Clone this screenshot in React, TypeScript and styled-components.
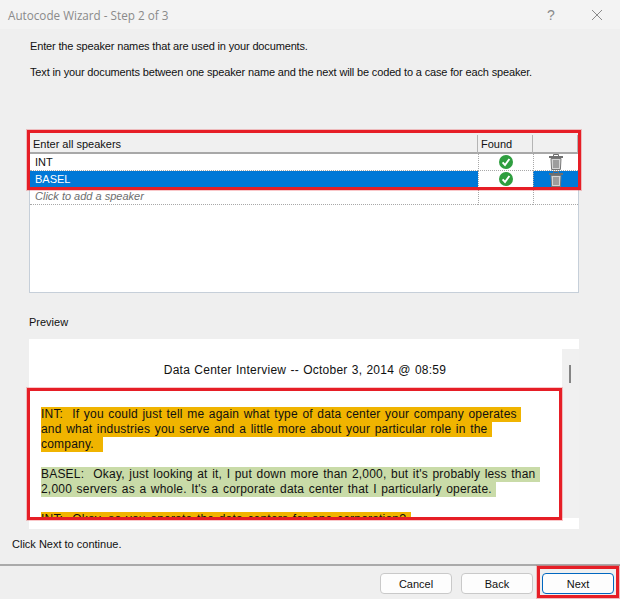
import * as React from 'react';
import styled, { createGlobalStyle } from 'styled-components';

const GlobalStyle = createGlobalStyle`
  html, body {
    margin: 0;
    padding: 0;
    background: #efefef;
  }
  body {
    font-family: "Liberation Sans", Arial, sans-serif;
    font-size: 11px;
    color: #111;
  }
`;

const Dialog = styled.div`
  width: 620px;
  height: 599px;
  display: flex;
  flex-direction: column;
  overflow: hidden;
  background: #efefef;
`;

const TitleBar = styled.div`
  height: 29px;
  display: flex;
  align-items: center;
  padding: 0 0 0 8px;
  background: #f3f3f3;
  flex: none;
`;

const Title = styled.div`
  flex: 1;
  color: #8a8a8a;
  font-family: "Open Sans", sans-serif;
  font-size: 11.7px;
`;

const TitleButton = styled.div`
  width: 46px;
  display: flex;
  justify-content: center;
  color: #8a8a8a;
  font-size: 14px;
`;

const Body = styled.div`
  flex: 1;
  display: flex;
  flex-direction: column;
  padding: 10px 41px 0 29px;
`;

const Intro = styled.p`
  margin: 0 0 12px 1px;
  height: 14px;
  line-height: 14px;
  white-space: nowrap;
  letter-spacing: -0.15px;
`;

const Outlined = styled.div`
  position: relative;
  display: flex;
`;

const RedBox = styled.div<{ $inset: string }>`
  position: absolute;
  inset: ${(props) => props.$inset};
  border: 3px solid #e61e26;
  box-shadow: 0 0 0 1px rgba(230, 30, 38, 0.25);
  pointer-events: none;
  z-index: 2;
`;

const SpeakerPanel = styled.div`
  margin-top: 44px;
  height: 158px;
  position: relative;
  background: #fff;
  border: 1px solid #c6cfd9;
  border-top: 0;
  box-sizing: border-box;
`;

const SpeakerGrid = styled.div`
  display: grid;
  grid-template-columns: 448px 55px 1fr;
`;

const HeaderCell = styled.div`
  height: 17px;
  line-height: 19px;
  padding-left: 3px;
  background: #f0f0f0;
  border-right: 1px solid #b4b4b4;
  border-bottom: 2px solid #a8a8a8;
`;

const NameCell = styled.div<{ $selected?: boolean; $hint?: boolean }>`
  height: 17px;
  line-height: 16px;
  padding-left: 5px;
  box-sizing: border-box;
  background: ${(props) => (props.$selected ? '#0078d7' : '#fff')};
  color: ${(props) => (props.$selected ? '#fff' : props.$hint ? '#6d6d6d' : '#111')};
  font-style: ${(props) => (props.$hint ? 'italic' : 'normal')};
  border-bottom: 1px dotted #a8a8a8;
`;

const IconCell = styled.div<{ $selected?: boolean }>`
  height: 17px;
  box-sizing: border-box;
  display: flex;
  align-items: center;
  justify-content: center;
  background: ${(props) => (props.$selected ? '#0078d7' : '#fff')};
  border-left: 1px dotted #a8a8a8;
  border-bottom: 1px dotted #a8a8a8;
`;

const PreviewLabel = styled.div`
  margin-top: 22px;
  height: 14px;
  line-height: 14px;
`;

const PreviewBox = styled.div`
  margin-top: 10px;
  height: 190px;
  flex: none;
  background: #fff;
  position: relative;
  padding: 10px 0 9px;
  box-sizing: border-box;
  display: flex;
`;

const DocView = styled.div`
  flex: 1;
  overflow: hidden;
  padding-left: 12px;
`;

const DocTitle = styled.div`
  height: 40px;
  padding-top: 13px;
  box-sizing: border-box;
  text-align: center;
  line-height: 16px;
  padding-left: 7px;
  font-size: 12px;
  word-spacing: 0.6px;
  letter-spacing: 0.25px;
`;

const DocBody = styled.div`
  margin-top: 18px;
  font-size: 12px;
`;

const Para = styled.div`
  margin-bottom: 15px;
`;

const Line = styled.div`
  height: 15px;
  line-height: 15px;
`;

const Mark = styled.span<{ $tone: 'int' | 'basel' }>`
  display: inline-block;
  height: 15px;
  white-space: pre;
  letter-spacing: 0.2px;
  word-spacing: 1px;
  background: ${(props) => (props.$tone === 'int' ? '#f0b400' : '#c9dba8')};
`;

const ScrollTrack = styled.div`
  width: 17px;
  height: 169px;
  background: #f0f0f0;
  flex: none;
  display: flex;
  justify-content: center;
  align-items: flex-start;
  padding: 16px 1px 0 0;
  box-sizing: border-box;
`;

const ScrollThumb = styled.div`
  width: 2px;
  height: 18px;
  background: #858585;
`;

const Hint = styled.div`
  margin: 8px 0 0 -17px;
  height: 14px;
  line-height: 14px;
`;

const Footer = styled.div`
  flex: none;
  height: 26px;
  border-top: 2px solid #aaaaaa;
  display: flex;
  align-items: flex-start;
  justify-content: flex-end;
  gap: 9px;
  padding: 7px 6px 0 0;
`;

const Button = styled.button<{ $primary?: boolean }>`
  width: 72px;
  height: 21px;
  padding: 0;
  box-sizing: border-box;
  background: #fdfdfd;
  border: 1px solid ${(props) => (props.$primary ? '#0067c0' : '#c9c9c9')};
  border-radius: 4px;
  font: inherit;
  color: #111;
`;

const CheckIcon = () => (
  <svg width="14" height="14" viewBox="0 0 14 14">
    <circle cx="7" cy="7" r="7" fill="#2f9e3f" />
    <path d="M3.6 7.4 6 10l4.4-6" fill="none" stroke="#fff" strokeWidth="2" />
  </svg>
);

const TrashIcon = () => (
  <svg width="14" height="16" viewBox="0 0 14 16">
    <path d="M4.5 2V.5h5V2" fill="none" stroke="#6f6f6f" />
    <rect x="0" y="2" width="14" height="2" fill="#6f6f6f" />
    <path d="M2 4.5h10l-.6 11H2.6z" fill="#d4d4d4" stroke="#777" />
    <path d="M5 6v8M7 6v8M9 6v8" stroke="#666" strokeWidth="1" />
  </svg>
);

export default function App() {
  return (
    <Dialog>
      <GlobalStyle />
      <TitleBar>
        <Title>Autocode Wizard - Step 2 of 3</Title>
        <TitleButton>?</TitleButton>
        <TitleButton>
          <svg width="12" height="12" viewBox="0 0 12 12">
            <path d="M1 1l10 10M11 1 1 11" stroke="#8a8a8a" fill="none" />
          </svg>
        </TitleButton>
      </TitleBar>
      <Body>
        <Intro>Enter the speaker names that are used in your documents.</Intro>
        <Intro>Text in your documents between one speaker name and the next will be coded to a case for each speaker.</Intro>
        <SpeakerPanel>
          <SpeakerGrid>
            <HeaderCell>Enter all speakers</HeaderCell>
            <HeaderCell>Found</HeaderCell>
            <HeaderCell />
            <NameCell>INT</NameCell>
            <IconCell><CheckIcon /></IconCell>
            <IconCell><TrashIcon /></IconCell>
            <NameCell $selected>BASEL</NameCell>
            <IconCell><CheckIcon /></IconCell>
            <IconCell $selected><TrashIcon /></IconCell>
            <NameCell $hint>Click to add a speaker</NameCell>
            <IconCell />
            <IconCell />
          </SpeakerGrid>
          <RedBox $inset="-5px -3px auto -3px" style={{ height: 54 }} />
        </SpeakerPanel>
        <PreviewLabel>Preview</PreviewLabel>
        <PreviewBox>
          <DocView>
            <DocTitle>Data Center Interview -- October 3, 2014 @ 08:59</DocTitle>
            <DocBody>
              <Para>
                <Line><Mark $tone="int">INT:  If you could just tell me again what type of data center your company operates </Mark></Line>
                <Line><Mark $tone="int">and what industries you serve and a little more about your particular role in the </Mark></Line>
                <Line><Mark $tone="int">company.  </Mark></Line>
              </Para>
              <Para>
                <Line><Mark $tone="basel">BASEL:  Okay, just looking at it, I put down more than 2,000, but it's probably less than </Mark></Line>
                <Line><Mark $tone="basel">2,000 servers as a whole. It's a corporate data center that I particularly operate. </Mark></Line>
              </Para>
              <Para>
                <Line><Mark $tone="int">INT:  Okay, so you operate the data centers for one corporation? </Mark></Line>
              </Para>
            </DocBody>
          </DocView>
          <ScrollTrack><ScrollThumb /></ScrollTrack>
          <RedBox $inset="49px 17px 9px -2px" />
        </PreviewBox>
        <Hint>Click Next to continue.</Hint>
      </Body>
      <Footer>
        <Button>Cancel</Button>
        <Button>Back</Button>
        <Outlined>
          <Button $primary>Next</Button>
          <RedBox $inset="-7px -5px -4px -5px" />
        </Outlined>
      </Footer>
    </Dialog>
  );
}
